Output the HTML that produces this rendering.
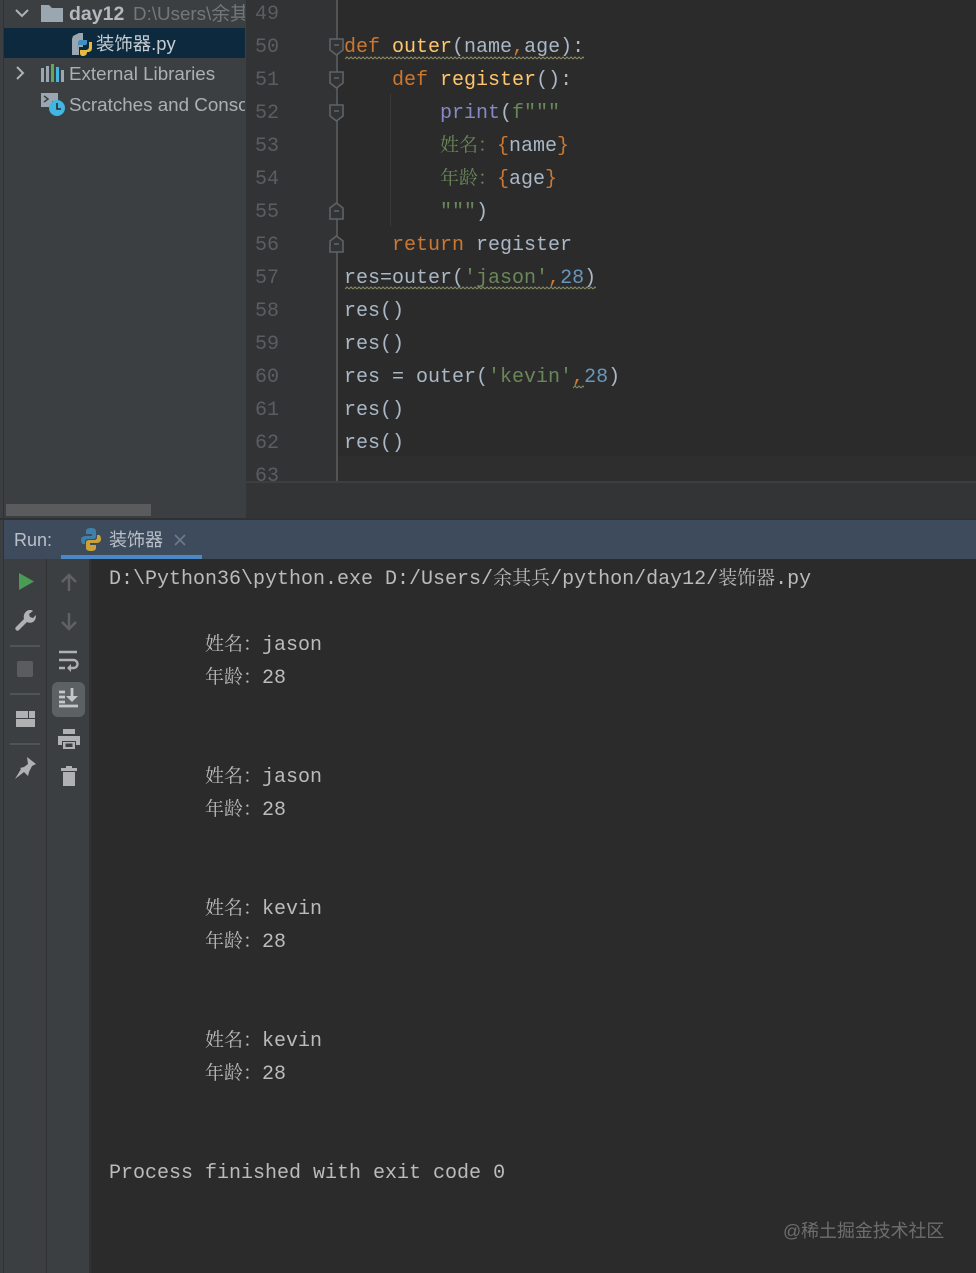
<!DOCTYPE html>
<html><head><meta charset="utf-8">
<style>
html,body{margin:0;padding:0;background:#2b2b2b}
#r{position:relative;width:976px;height:1273px;overflow:hidden;background:#2b2b2b}
.a{position:absolute}
.t{position:absolute;white-space:pre;font-family:"Liberation Mono","Noto Serif CJK SC",monospace;font-size:20px;line-height:33px;height:33px;color:#a9b7c6}
.u{font-family:"Liberation Sans","Noto Sans CJK SC",sans-serif;white-space:pre;position:absolute;font-size:18.800px;line-height:26px;color:#b5bcc4}
.n{position:absolute;left:255px;width:24px;font-family:"Liberation Mono",monospace;font-size:20px;line-height:33px;color:#5b5e60;white-space:pre}
.k{color:#cc7832}.f{color:#ffc66d}.s{color:#6a8759}.b{color:#6897bb}.p{color:#8888c6}
.z{font-size:19px;font-family:"Noto Serif CJK SC",serif;line-height:1}
.ic{position:absolute;overflow:visible}
.w{position:absolute;height:4px}
</style></head><body><div id="r">
<div class="a" style="left:0;top:0;width:246px;height:518px;background:#3c3f41"></div>
<div class="a" style="left:3px;top:0;width:1px;height:518px;background:#323232"></div>
<div class="a" style="left:246px;top:0;width:92px;height:483px;background:#313335"></div>
<div class="a" style="left:338px;top:456px;width:638px;height:27px;background:#2e2e2e"></div>
<div class="a" style="left:246px;top:483px;width:730px;height:35px;background:#323436"></div>
<div class="a" style="left:246px;top:481px;width:730px;height:2px;background:#3c3e40"></div>
<div class="a" style="left:336px;top:0;width:2px;height:481px;background:#515355"></div>
<div class="a" style="left:4px;top:28px;width:241px;height:30px;background:#0d293e"></div>
<div class="a" style="left:6px;top:504px;width:145px;height:12px;background:#595b5d"></div>

<svg class="ic" style="left:14px;top:7px" width="16" height="12" viewBox="0 0 16 12"><path d="M2 3l6 6 6-6" fill="none" stroke="#aeb2b6" stroke-width="2"/></svg>
<svg class="ic" style="left:41px;top:4px" width="22" height="18" viewBox="0 0 22 18"><path d="M0 1h8l3 3h11v14H0z" fill="#9aa7b0"/></svg>
<div class="u" style="left:69px;top:1px;font-weight:bold;color:#b4b9bf;font-size:19.500px">day12</div>
<div class="u" style="left:133px;top:1px;color:#73777a;width:112px;overflow:hidden">D:\Users\余其兵</div>

<svg class="ic" style="left:71px;top:33px" width="22" height="24" viewBox="0 0 22 24"><path d="M2 3l6-3h4v14H8v8H1V6z" fill="#9aa7b0"/><path d="M6 17c0-4 1-5 4-5h4c2 0 2-1 2-3V7h-6c-2 0-3 1-3 3v2" fill="#3f8fc0"/><path d="M9 17h5c3 0 4-1 4-4V9h3v6c0 3-2 4-4 4h-1c0 3-2 4-4 4s-3-1-3-3z" fill="#e8bb3c"/></svg>
<div class="u" style="left:96px;top:31px;color:#c6ccd2;font-size:18.400px">装饰器.py</div>

<svg class="ic" style="left:14px;top:65px" width="12" height="16" viewBox="0 0 12 16"><path d="M3 2l6 6-6 6" fill="none" stroke="#aeb2b6" stroke-width="2"/></svg>
<svg class="ic" style="left:41px;top:64px" width="23" height="18" viewBox="0 0 23 18"><rect x="0" y="4" width="3" height="14" fill="#9aa7b0"/><rect x="5" y="2" width="3" height="16" fill="#9aa7b0"/><rect x="10" y="0" width="3" height="18" fill="#62a857"/><rect x="15" y="3" width="3" height="15" fill="#40b6e0"/><rect x="20" y="6" width="3" height="12" fill="#9aa7b0"/></svg>
<div class="u" style="left:69px;top:61px;color:#aab0b6">External Libraries</div>

<svg class="ic" style="left:41px;top:93px" width="24" height="24" viewBox="0 0 24 24"><path d="M0 0h17v8h-6v6H0z" fill="#9aa7b0"/><path d="M3 3l4 3-4 3" fill="none" stroke="#3c3f41" stroke-width="1.5"/><circle cx="16" cy="15" r="8" fill="#40b6e0"/><path d="M16 10v6h4" fill="none" stroke="#2b2b2b" stroke-width="1.6"/></svg>
<div class="u" style="left:69px;top:92px;color:#aab0b6;width:176px;overflow:hidden">Scratches and Console</div>

<div class="n" style="top:-2px">49</div><div class="n" style="top:31px">50</div><div class="n" style="top:64px">51</div><div class="n" style="top:97px">52</div><div class="n" style="top:130px">53</div><div class="n" style="top:163px">54</div><div class="n" style="top:196px">55</div><div class="n" style="top:229px">56</div><div class="n" style="top:262px">57</div><div class="n" style="top:295px">58</div><div class="n" style="top:328px">59</div><div class="n" style="top:361px">60</div><div class="n" style="top:394px">61</div><div class="n" style="top:427px">62</div><div class="n" style="top:460px;height:23px;overflow:hidden">63</div>

<svg class="ic" style="left:329px;top:38px" width="16" height="220" viewBox="0 0 16 220" fill="#313335" stroke="#606366" stroke-width="1.6">
<path d="M1 1h13v11l-6.500 5-6.500-5z"/><path d="M5 7h5"/>
<path d="M1 34h13v11l-6.500 5-6.500-5z"/><path d="M5 40h5"/>
<path d="M1 67h13v11l-6.500 5-6.500-5z"/><path d="M5 73h5"/>
<path d="M1 181h13v-11l-6.500-5-6.500 5z"/><path d="M5 173h5"/>
<path d="M1 214h13v-11l-6.500-5-6.500 5z"/><path d="M5 206h5"/>
</svg>
<div class="a" style="left:390px;top:94px;width:1px;height:132px;background:#3a3a3a"></div>

<svg width="0" height="0" style="position:absolute"><defs><pattern id="wv" width="4" height="4" patternUnits="userSpaceOnUse"><path d="M0 3L2 1L4 3" fill="none" stroke="#8b8b62" stroke-width="1"/></pattern></defs></svg>

<div class="t" style="left:344px;top:31px"><span class="k">def</span> <span class="f">outer</span>(name<span class="k">,</span>age):</div>
<svg class="w" style="left:345px;top:56px" width="239" height="4"><rect width="239" height="4" fill="url(#wv)"/></svg>
<div class="t" style="left:344px;top:64px">    <span class="k">def</span> <span class="f">register</span>():</div>
<div class="t" style="left:344px;top:97px">        <span class="p">print</span>(<span class="s">f"""</span></div>
<div class="t" style="left:440px;top:130px"><span class="s z">姓名：</span><span style="position:absolute;left:57px;top:0;white-space:pre"><span class="k">{</span>name<span class="k">}</span></span></div>
<div class="t" style="left:440px;top:163px"><span class="s z">年龄：</span><span style="position:absolute;left:57px;top:0;white-space:pre"><span class="k">{</span>age<span class="k">}</span></span></div>
<div class="t" style="left:344px;top:196px">        <span class="s">"""</span>)</div>
<div class="t" style="left:344px;top:229px">    <span class="k">return</span> register</div>
<div class="t" style="left:344px;top:262px">res=outer(<span class="s">'jason'</span><span class="k">,</span><span class="b">28</span>)</div>
<svg class="w" style="left:345px;top:286px" width="251" height="4"><rect width="251" height="4" fill="url(#wv)"/></svg>
<div class="t" style="left:344px;top:295px">res()</div>
<div class="t" style="left:344px;top:328px">res()</div>
<div class="t" style="left:344px;top:361px">res = outer(<span class="s">'kevin'</span><span class="k">,</span><span class="b">28</span>)</div>
<svg class="w" style="left:573px;top:385px" width="11" height="4"><rect width="11" height="4" fill="url(#wv)"/></svg>
<div class="t" style="left:344px;top:394px">res()</div>
<div class="t" style="left:344px;top:427px">res()</div>

<div class="a" style="left:0;top:518px;width:976px;height:2px;background:#2f3133"></div>
<div class="a" style="left:4px;top:520px;width:972px;height:39px;background:#3d4b5c"></div>
<div class="a" style="left:0;top:520px;width:4px;height:753px;background:#3c3f41"></div>
<div class="a" style="left:3px;top:518px;width:1px;height:755px;background:#323232"></div>
<div class="u" style="left:14px;top:527px;color:#b9c0c8;font-size:18px">Run:</div>
<div class="a" style="left:61px;top:555px;width:141px;height:4px;background:#4a88c7"></div>
<svg class="ic" style="left:80px;top:528px" width="22" height="23" viewBox="0 0 22 23"><path d="M1 12c0-3 2-4 5-4h6V6H6V3c0-2 2-3 5-3s5 1 5 3v5c0 2-1 3-3 3H8c-2 0-3 1-3 3v2H3c-1 0-2-2-2-4z" fill="#3f7fa8"/><path d="M21 11c0 3-2 4-5 4h-6v2h6v3c0 2-2 3-5 3s-5-1-5-3v-5c0-2 1-3 3-3h5c2 0 3-1 3-3V7h2c1 0 2 2 2 4z" fill="#c9a23a"/></svg>
<div class="u" style="left:109px;top:527px;color:#b9c0c8;font-size:18px">装饰器</div>
<svg class="ic" style="left:174px;top:534px" width="12" height="12" viewBox="0 0 12 12"><path d="M1 1l10 10M11 1L1 11" stroke="#6d7a88" stroke-width="1.600"/></svg>

<div class="a" style="left:4px;top:559px;width:42px;height:714px;background:#3c3f41"></div>
<div class="a" style="left:46px;top:559px;width:1px;height:714px;background:#323232"></div>
<div class="a" style="left:47px;top:559px;width:42px;height:714px;background:#3c3f41"></div>
<div class="a" style="left:89px;top:559px;width:2px;height:714px;background:#323232"></div>

<svg class="ic" style="left:19px;top:573px" width="15" height="17" viewBox="0 0 15 17"><path d="M0 0l15 8.500L0 17z" fill="#499c54"/></svg>
<svg class="ic" style="left:15px;top:610px" width="21" height="21" viewBox="0 0 21 21"><path d="M1 17l8-8C8 5 10 1 14 0c2 0 3 0 4 1l-4 3 1 3 3 1 3-3c0 3-1 6-3 7-2 1-4 1-6 0l-8 8c-1 1-2 1-3 0-1-1-1-2 0-3z" fill="#afb1b3"/></svg>
<div class="a" style="left:10px;top:645px;width:30px;height:2px;background:#515355"></div>
<div class="a" style="left:17px;top:661px;width:16px;height:16px;background:#5a5c5e;border-radius:2px"></div>
<div class="a" style="left:10px;top:693px;width:30px;height:2px;background:#515355"></div>
<svg class="ic" style="left:16px;top:711px" width="19" height="16" viewBox="0 0 19 16" fill="#afb1b3"><rect width="12" height="7"/><rect x="13" width="6" height="7"/><rect y="8" width="19" height="8"/></svg>
<div class="a" style="left:10px;top:743px;width:30px;height:2px;background:#515355"></div>
<svg class="ic" style="left:14px;top:757px" width="22" height="22" viewBox="0 0 22 22"><path d="M13 0l9 7-4 2-3 6-1 4-8-8 4-1 4-3z M7 12l3 3-9 7z" fill="#afb1b3"/></svg>

<svg class="ic" style="left:61px;top:574px" width="16" height="17" viewBox="0 0 16 17"><path d="M8 1v16M1 8l7-7 7 7" fill="none" stroke="#5f6163" stroke-width="2.500"/></svg>
<svg class="ic" style="left:61px;top:613px" width="16" height="17" viewBox="0 0 16 17"><path d="M8 0v16M1 9l7 7 7-7" fill="none" stroke="#5f6163" stroke-width="2.500"/></svg>
<svg class="ic" style="left:59px;top:650px" width="20" height="22" viewBox="0 0 20 22"><path d="M0 2h18M0 10h14c6 0 6 8 0 8h-3M0 18h6" fill="none" stroke="#afb1b3" stroke-width="2.400"/><path d="M12 14l-4 4 4 4z" fill="#afb1b3"/></svg>
<div class="a" style="left:52px;top:682px;width:33px;height:35px;background:#5c6164;border-radius:6px"></div>
<svg class="ic" style="left:59px;top:688px" width="20" height="20" viewBox="0 0 20 20"><path d="M0 18h19M0 4h6M0 9h6M0 14h6" stroke="#c4c6c8" stroke-width="2.800" fill="none"/><path d="M13 0v9" stroke="#c4c6c8" stroke-width="2.800"/><path d="M7 8h12l-6 6z" fill="#c4c6c8"/></svg>
<svg class="ic" style="left:58px;top:728px" width="22" height="22" viewBox="0 0 22 22" fill="#afb1b3"><rect x="5" y="1" width="12" height="5"/><path d="M0 8h22v9h-4v-4H4v4H0z"/><path d="M5 14h12v7H5zM7.500 15.500v3.500h7v-3.500z" fill-rule="evenodd"/></svg>
<svg class="ic" style="left:61px;top:766px" width="16" height="20" viewBox="0 0 16 20" fill="#afb1b3"><rect x="0" y="2" width="16" height="3"/><rect x="5" y="0" width="6" height="3"/><path d="M2 6h12v14H2z"/></svg>

<div class="t" style="left:109px;top:563px;color:#bbbbbb">D:\Python36\python.exe D:/Users/<span class="z">余其兵</span>/python/day12/<span class="z">装饰器</span>.py</div>
<div class="t" style="left:205px;top:629px;color:#bbbbbb"><span class="z">姓名：</span>jason</div>
<div class="t" style="left:205px;top:662px;color:#bbbbbb"><span class="z">年龄：</span>28</div>
<div class="t" style="left:205px;top:761px;color:#bbbbbb"><span class="z">姓名：</span>jason</div>
<div class="t" style="left:205px;top:794px;color:#bbbbbb"><span class="z">年龄：</span>28</div>
<div class="t" style="left:205px;top:893px;color:#bbbbbb"><span class="z">姓名：</span>kevin</div>
<div class="t" style="left:205px;top:926px;color:#bbbbbb"><span class="z">年龄：</span>28</div>
<div class="t" style="left:205px;top:1025px;color:#bbbbbb"><span class="z">姓名：</span>kevin</div>
<div class="t" style="left:205px;top:1058px;color:#bbbbbb"><span class="z">年龄：</span>28</div>
<div class="t" style="left:109px;top:1157px;color:#bbbbbb">Process finished with exit code 0</div>

<div class="a" style="left:783px;top:1218px;font-family:'Liberation Sans','Noto Sans CJK SC',sans-serif;font-size:17.900px;line-height:26px;color:#6e6e6e;white-space:pre">@稀土掘金技术社区</div>
</div></body></html>
